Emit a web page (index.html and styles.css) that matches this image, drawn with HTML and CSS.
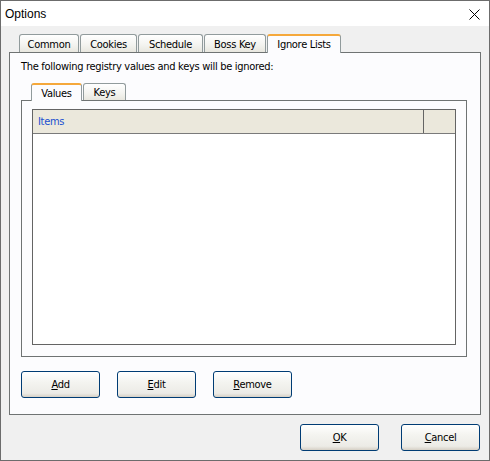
FILE: index.html
```html
<!DOCTYPE html>
<html>
<head>
<meta charset="utf-8">
<link rel="stylesheet" href="styles.css">
</head>
<body>
<div class="window">
  <div class="titlebar">
    <span class="title">Options</span>
    <span class="close">
      <svg width="11" height="11" viewBox="0 0 11 11"><path d="M0.5 0.5 L10.5 10.5 M10.5 0.5 L0.5 10.5" stroke="#000" stroke-width="1" fill="none"/></svg>
    </span>
  </div>
  <div class="content">
    <div class="tabs outer-tabs">
      <div class="tab t-common">Common</div>
      <div class="tab t-cookies">Cookies</div>
      <div class="tab t-schedule">Schedule</div>
      <div class="tab t-boss">Boss Key</div>
      <div class="tab t-ignore selected">Ignore Lists</div>
    </div>
    <div class="panel">
      <div class="desc">The following registry values and keys will be ignored:</div>
      <div class="tabs inner-tabs">
        <div class="tab t-values selected">Values</div>
        <div class="tab t-keys">Keys</div>
      </div>
      <div class="inner-panel">
        <div class="list">
          <div class="list-header">
            <div class="col col-items">Items</div>
            <div class="col col-rest"></div>
          </div>
          <div class="list-body"></div>
        </div>
      </div>
      <div class="btn-row">
        <button class="btn"><u>A</u>dd</button>
        <button class="btn"><u>E</u>dit</button>
        <button class="btn"><u>R</u>emove</button>
      </div>
    </div>
    <div class="dlg-buttons">
      <button class="btn"><u>O</u>K</button>
      <button class="btn"><u>C</u>ancel</button>
    </div>
  </div>
</div>
</body>
</html>
```
FILE: styles.css
```css
html, body {
  margin: 0;
  padding: 0;
  background: #f0f0f0;
}
body {
  font-family: "DejaVu Sans Condensed", "Liberation Sans", sans-serif;
  font-size: 11px;
  letter-spacing: -0.3px;
  color: #000;
}
.window {
  width: 490px;
  height: 461px;
  box-sizing: border-box;
  border: 1px solid #6c6c6c;
  background: #f0f0f0;
  display: flex;
  flex-direction: column;
}
.titlebar {
  height: 25px;
  background: #fff;
  display: flex;
  align-items: center;
  justify-content: space-between;
  padding: 0 9px 0 4px;
}
.title {
  font-family: "Liberation Sans", sans-serif;
  font-size: 12px;
  letter-spacing: 0;
  padding-top: 1px;
}
.close {
  display: flex;
  width: 11px;
  height: 11px;
  margin-top: 1px;
}
.content {
  padding: 8px 8px 0 8px;
  display: flex;
  flex-direction: column;
}
.tabs {
  display: flex;
  align-items: flex-end;
  position: relative;
  z-index: 1;
}
.outer-tabs {
  margin-left: 10px;
  height: 18px;
}
.tab {
  box-sizing: border-box;
  height: 18px;
  border: 1px solid #919b9c;
  border-bottom: none;
  border-radius: 3px 3px 0 0;
  background: linear-gradient(#ffffff, #f3f3ef 60%, #e8e7df);
  display: flex;
  align-items: center;
  justify-content: center;
  padding-top: 1px;
  margin-right: 1px;
}
.tab.selected {
  background: #fcfcfe;
  border-top: 2px solid #f5a83b;
  height: 19px;
  margin-bottom: -1px;
  padding-top: 0;
}
.t-common { width: 60px; }
.t-cookies { width: 57px; }
.t-schedule { width: 65px; }
.t-boss { width: 62px; }
.t-ignore { width: 74px; }
.panel {
  box-sizing: border-box;
  height: 363px;
  border: 1px solid #6f7373;
  background: #fcfcfe;
  padding: 7px 13px 0 11px;
  display: flex;
  flex-direction: column;
}
.desc {
  height: 13px;
  line-height: 13px;
}
.inner-tabs {
  margin-top: 10px;
  margin-left: 10px;
  height: 17px;
}
.inner-tabs .tab { height: 17px; }
.inner-tabs .tab.selected { height: 18px; }
.t-values { width: 51px; }
.t-keys { width: 43px; }
.inner-panel {
  box-sizing: border-box;
  height: 257px;
  border: 1px solid #6f7373;
  background: #fcfcfe;
  padding: 8px 10px 0 10px;
}
.list {
  box-sizing: border-box;
  height: 236px;
  border: 1px solid #646464;
  background: #fff;
  display: flex;
  flex-direction: column;
}
.list-header {
  height: 24px;
  box-sizing: border-box;
  background: #ebe8dc;
  border-bottom: 1px solid #7a7a7a;
  display: flex;
}
.col {
  display: flex;
  align-items: center;
}
.col-items {
  flex: 1;
  color: #1a4fd0;
  padding-left: 5px;
  border-right: 1px solid #646464;
}
.col-rest {
  width: 31px;
}
.btn-row {
  display: flex;
  gap: 17px;
  margin-top: 14px;
}
.btn {
  box-sizing: border-box;
  width: 79px;
  height: 27px;
  border: 1px solid #003c74;
  border-radius: 3px;
  background: linear-gradient(#ffffff, #f4f4f0 40%, #ecebe6 85%, #d6d0c5);
  font-family: inherit;
  font-size: 11px;
  letter-spacing: -0.3px;
  color: #000;
  padding: 0;
  margin: 0;
}
.btn u {
  text-decoration: underline;
  text-underline-offset: 1px;
}
.dlg-buttons {
  display: flex;
  justify-content: flex-end;
  gap: 22px;
  margin-top: 9px;
  padding-right: 1px;
}
```
